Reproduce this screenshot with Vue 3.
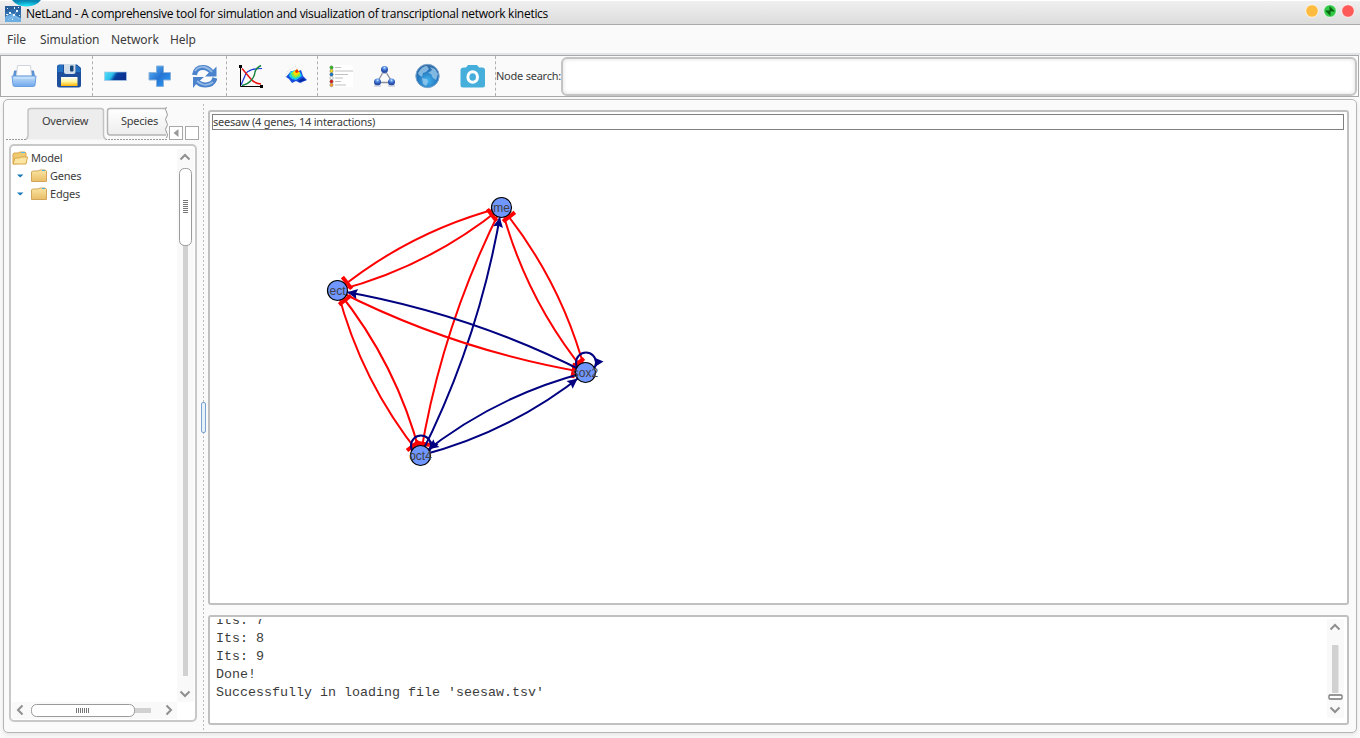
<script setup>
const menus = ['File', 'Simulation', 'Network', 'Help']

const nodes = {
  me: { x: 501.5, y: 207.5, label: 'me' },
  ect: { x: 337.5, y: 290.5, label: 'ect' },
  oct4: { x: 420.5, y: 455.5, label: 'oct4' },
  sox2: { x: 585.5, y: 372.5, label: 'sox2' },
}

const links = [
  ['ect', 'me', 'inhibit'], ['me', 'ect', 'inhibit'],
  ['me', 'sox2', 'inhibit'], ['sox2', 'me', 'inhibit'],
  ['me', 'oct4', 'inhibit'], ['oct4', 'me', 'activate'],
  ['ect', 'sox2', 'inhibit'], ['sox2', 'ect', 'activate'],
  ['ect', 'oct4', 'inhibit'], ['oct4', 'ect', 'inhibit'],
  ['oct4', 'sox2', 'activate'], ['sox2', 'oct4', 'activate'],
]

const BEND = 20
const RADIUS = 10

// Quadratic edge bent to one side, with the marker placed where it meets the target circle
const edges = links.map(([from, to, kind]) => {
  const a = nodes[from]
  const b = nodes[to]
  const dx = b.x - a.x
  const dy = b.y - a.y
  const len = Math.hypot(dx, dy)
  const cx = (a.x + b.x) / 2 - (dy / len) * BEND
  const cy = (a.y + b.y) / 2 + (dx / len) * BEND
  let t = 1
  let px = b.x
  let py = b.y
  while (Math.hypot(px - b.x, py - b.y) < RADIUS) {
    t -= 0.001
    px = (1 - t) ** 2 * a.x + 2 * t * (1 - t) * cx + t * t * b.x
    py = (1 - t) ** 2 * a.y + 2 * t * (1 - t) * cy + t * t * b.y
  }
  const tx = (1 - t) * (cx - a.x) + t * (b.x - cx)
  const ty = (1 - t) * (cy - a.y) + t * (b.y - cy)
  const angle = (Math.atan2(ty, tx) * 180) / Math.PI
  return {
    id: from + to,
    kind,
    d: `M${a.x} ${a.y}Q${cx} ${cy} ${b.x} ${b.y}`,
    marker: `translate(${px} ${py}) rotate(${angle})`,
  }
})

const loops = [nodes.oct4, nodes.sox2]
const log = ['Its: 7', 'Its: 8', 'Its: 9', 'Done!', "Successfully in loading file 'seesaw.tsv'"]
const legend = ['#2fc21e', '#f4dc1c', '#1575cf', '#fff', '#e01818', '#ffa02b']
</script>

<template>
  <div class="window">
    <header class="titlebar">
      <svg class="orb" width="32" height="7" viewBox="0 0 32 7">
        <defs>
          <radialGradient id="orb" cx=".5" cy=".85" r=".7"><stop offset="0" stop-color="#19e0f5" /><stop offset="1" stop-color="#0787b4" /></radialGradient>
        </defs>
        <path d="M1 0H30Q25 6.500 15.500 6.500Q6 6.500 1 0Z" fill="url(#orb)" />
      </svg>
      <svg class="app-icon" width="16" height="16" viewBox="0 0 16 16">
        <rect width="16" height="16" fill="#2f6fae" />
        <path d="M0 11L7 8L16 12V16H0Z" fill="#6aaee4" />
        <path d="M0 0H16V4L8 3L0 6Z" fill="#285e99" />
        <path d="M1 11L5 7L9 9L12 5M9 9L7 14M9 9L14 13M3 14L7 11" stroke="#a9cdec" fill="none" stroke-width=".6" />
        <g fill="#e8f3fc"><rect x="4" y="6" width="2" height="2" /><rect x="11" y="4" width="2" height="2" /><rect x="8" y="8" width="2" height="2" /><rect x="2" y="2" width="1" height="1" /><rect x="13" y="1" width="1" height="1" /><rect x="7" y="13" width="1" height="1" /><rect x="9" y="1" width="1" height="2" /><rect x="1" y="8" width="2" height="1" /><rect x="14" y="9" width="1" height="1" /></g>
      </svg>
      <span class="title">NetLand - A comprehensive tool for simulation and visualization of transcriptional network kinetics</span>
      <svg class="controls" width="54" height="16" viewBox="0 0 54 16">
        <g stroke="#fff" stroke-opacity=".8" stroke-width="1">
          <circle cx="8" cy="8" r="6.300" fill="#fdbc40" /><circle cx="26" cy="8" r="6.300" fill="#35c94a" /><circle cx="44" cy="8" r="6.300" fill="#ff5a57" />
        </g>
        <path d="M25.500 3L31 8.500H25.500ZM21 7.500H26.500V13Z" fill="#07650f" />
      </svg>
    </header>

    <nav class="menubar">
      <span v-for="m in menus" :key="m" :class="m.toLowerCase()">{{ m }}</span>
    </nav>

    <div class="toolbar">
      <div class="group g1">
        <svg width="26" height="26" viewBox="0 0 26 26">
          <defs>
            <linearGradient id="tray" x2="0" y2="1"><stop offset="0" stop-color="#c3dffa" /><stop offset="1" stop-color="#6fa8ea" /></linearGradient>
          </defs>
          <path d="M3.500 8L2.500 14H23.500L22.500 8Z" fill="#5b93d8" stroke="#4f86cc" />
          <path d="M5.500 13L6.500 2.500H19.500L20.500 13Z" fill="#fff" stroke="#d0d4da" />
          <path d="M1 13H25L24 22Q23.800 23.500 22.500 23.500H3.500Q2.200 23.500 2 22Z" fill="url(#tray)" stroke="#6a9fdf" />
          <path d="M3 15H23" stroke="#d3e8fc" />
        </svg>
        <svg width="26" height="26" viewBox="0 0 26 26">
          <defs><linearGradient id="disk" x2="0" y2="1"><stop offset="0" stop-color="#fff" /><stop offset=".5" stop-color="#fff6a0" /><stop offset="1" stop-color="#ffb400" /></linearGradient></defs>
          <path d="M3.500 1.500H21L25 5V22Q25 24.500 22.500 24.500H3.500Q1 24.500 1 22V4Q1 1.500 3.500 1.500Z" fill="#1d4f9c" />
          <path d="M1.500 9V4Q1.500 2 4 2H7V9ZM20 2L24.500 6V9H20Z" fill="#2672c2" />
          <path d="M8 1H19.500V9Q19.500 11 17.500 11H10Q8 11 8 9Z" fill="#d2deea" />
          <rect x="14" y="2.500" width="3.500" height="6" rx="1" fill="#164579" />
          <rect x="5" y="14" width="16.500" height="9" fill="url(#disk)" />
        </svg>
      </div>
      <div class="group g2">
        <svg width="26" height="26" viewBox="0 0 26 26">
          <defs>
            <linearGradient id="minus" x2="1" y2=".25"><stop offset="0" stop-color="#55dff8" /><stop offset=".4" stop-color="#2cc0ec" /><stop offset=".6" stop-color="#0440a0" /><stop offset="1" stop-color="#0c2f91" /></linearGradient>
          </defs>
          <rect x="1.500" y="9" width="22" height="8.500" fill="url(#minus)" stroke="#a9c8e4" stroke-width=".7" />
        </svg>
        <svg width="26" height="26" viewBox="0 0 26 26">
          <defs><linearGradient id="plus" x2="1" y2="1"><stop offset="0" stop-color="#65b9fa" /><stop offset=".5" stop-color="#2674d2" /><stop offset="1" stop-color="#2ba2fa" /></linearGradient></defs>
          <path d="M9.500 3H16.500V9.500H23.500V17H16.500V23.500H9.500V17H2V9.500H9.500Z" fill="url(#plus)" stroke="#8bb2dc" />
        </svg>
        <svg width="26" height="26" viewBox="0 0 26 26">
          <g fill="none" stroke="#4a83cc" stroke-width="5">
            <path d="M3.500 12Q4.500 4.500 12 4.500Q17 4.500 20.500 9" />
            <path d="M24 15Q22 22 14.500 22Q9 22 5.500 18" />
          </g>
          <path d="M25.500 3.500V13.500H14L17.500 10L21 8ZM2 25V14H13L9 17.500L6 20Z" fill="#4a83cc" />
          <path d="M4 8Q7 3.500 13 4Q18 5 21 9M22 19Q17 23 12 21.500Q8 20 6 18" fill="none" stroke="#92b9e6" stroke-width="1.800" />
        </svg>
      </div>
      <div class="group g3">
        <svg width="26" height="26" viewBox="0 0 26 26">
          <path d="M3 22L6.500 14Q8 9 11 8Q14 5.500 24 5.500" fill="none" stroke="#1835d8" stroke-width="1.200" />
          <path d="M4 5.500L12 15Q16 20.500 23 21" fill="none" stroke="#e91111" stroke-width="1.400" />
          <path d="M4 22.500Q10 21 12.500 18Q16.500 14 17 9Q18 5 23 2.500" fill="none" stroke="#12843c" stroke-width="1.400" />
          <path d="M2.500 3V23.500H24" fill="none" stroke="#000" />
          <path d="M1 2H4V5H1ZM22 22H25V25H22Z" fill="#000" />
        </svg>
        <svg width="26" height="26" viewBox="0 0 26 26">
          <path d="M2 14L5 8L13 3L21 14L18 22" fill="none" stroke="#d4d4d4" stroke-dasharray="1 2" />
          <path d="M3 14L8 8L12 10L18 7L20 13L24 17L17 20L13 18L9 20L6 16Z" fill="#174ee0" />
          <path d="M7 9L12 7L17 9L19 13L13 17L9 16L6 13Z" fill="#18d0e8" />
          <path d="M8 10L12 8L17 10L17 13L12 15L9 13Z" fill="#7fed49" />
          <path d="M10 9L14 6L17 10L13 13L11 12Z" fill="#ffd900" />
          <path d="M12 8L14 6L16 9L13 10Z" fill="#f03108" />
          <path d="M15 18L20 15L23 17L17 19Z" fill="#07279e" />
        </svg>
      </div>
      <div class="group g4">
        <svg width="26" height="26" viewBox="0 0 26 26">
          <rect x="1" y="2" width="24" height="22" fill="#fff" />
          <g v-for="(c, i) in legend" :key="c">
            <circle cx="3.500" :cy="4.5 + i * 3.5" r="1.700" :fill="c" stroke="#555" stroke-width=".4" />
            <path :d="`M7 ${4.5 + i * 3.5}h${[6, 18, 13, 8, 6, 11][i]}`" stroke="#c0c0c0" stroke-width="1" />
          </g>
        </svg>
        <svg width="26" height="26" viewBox="0 0 26 26">
          <defs><radialGradient id="ball" cx=".5" cy=".25"><stop offset="0" stop-color="#d9ecff" /><stop offset=".4" stop-color="#5b96ea" /><stop offset="1" stop-color="#2a50ab" /></radialGradient></defs>
          <path d="M12.500 7L5 19.500H20.500Z" fill="none" stroke="#8b8d98" stroke-width="1.300" />
          <circle cx="12.500" cy="6.500" r="3.500" fill="url(#ball)" /><circle cx="5.500" cy="19" r="3.500" fill="url(#ball)" /><circle cx="19.500" cy="19" r="3.500" fill="url(#ball)" />
          <path d="M9 10.500H16M2 23H9M16 23H23" stroke="#b8bcca" />
        </svg>
        <svg class="globe" width="26" height="26" viewBox="0 0 26 26">
          <defs><radialGradient id="globe" cx=".5" cy=".7" r=".7"><stop offset="0" stop-color="#42b5f1" /><stop offset=".6" stop-color="#2576bd" /><stop offset="1" stop-color="#34699f" /></radialGradient></defs>
          <circle cx="12.500" cy="13" r="11.700" fill="url(#globe)" stroke="#7ba6cf" />
          <path d="M5 7Q8 3 12 3L14 6L11 9L8 10L7 14L4 12L3 10ZM15 4L20 6L23 11L21 17L18 15L16 11L13 10L17 7ZM7 15L12 16L13 19L11 23L8 21Z" fill="#9fcdee" opacity=".75" />
        </svg>
        <svg width="26" height="26" viewBox="0 0 26 26">
          <path d="M4 4.500H6L8 2H17L19 4.500H22Q25 4.500 25 7V22Q25 24.500 22.500 24.500H3Q.5 24.500 .5 22V7Q.5 4.500 4 4.500Z" fill="#46aedb" />
          <ellipse cx="12.700" cy="14" rx="4.800" ry="5.300" fill="none" stroke="#fff" stroke-width="3" />
        </svg>
      </div>
      <label class="search"><span>Node search:</span><input type="text" aria-label="Node search" /></label>
    </div>

    <main class="workspace">
      <aside class="side">
        <div class="tabs">
          <svg class="tab-shapes" width="196" height="36" viewBox="5 105 196 36">
            <defs><linearGradient id="tab" x2="0" y2="1"><stop offset="0" stop-color="#fff" /><stop offset="1" stop-color="#ededed" /></linearGradient></defs>
            <path d="M6 139.500H26M105 139.500H167" stroke="#999" stroke-dasharray="2 1" />
            <path d="M26 139.500Q28 138 28 135V111Q28 108.500 31 108.500H101Q103.500 108.500 103.500 111V135Q103.500 138 106 139.500Z" fill="#ededed" />
            <path d="M26 139.500Q28 138 28 135V111Q28 108.500 31 108.500H101Q103.500 108.500 103.500 111V135Q103.500 138 106 139.500" fill="none" stroke="#c3c3c3" stroke-width="1.500" />
            <path d="M166 108.500H110Q107.500 108.500 107.500 111V132Q107.500 135 110 135H166" fill="url(#tab)" stroke="#b3b3b3" stroke-width="1.500" />
            <path d="M166.500 107Q164.500 109 166.500 112T166.500 117T166.500 122T166.500 127T166.500 132T166.500 138" fill="none" stroke="#999" />
            <g fill="#fff" stroke="#a8a8a8"><rect x="169.500" y="126.500" width="13" height="13" /><rect x="185.500" y="126.500" width="13" height="13" /></g>
            <path d="M178.500 129V137L173.500 133Z" fill="#999" />
          </svg>
          <span class="tab overview">Overview</span>
          <span class="tab species">Species</span>
        </div>
        <div class="tree">
          <div class="tree-body">
            <div class="row">
              <svg width="16" height="14" viewBox="0 0 16 14">
                <path d="M1 13V3L2 2H6L8 1H13L14 2V12Z" fill="#f0ca70" stroke="#d9a64c" />
                <path d="M9 1.500H13" stroke="#55b8e8" />
                <path d="M1 13L3 7H7L9 6H15.500L14 13Z" fill="#fbe6a1" stroke="#d9a64c" />
              </svg>
              <span>Model</span>
            </div>
            <div v-for="n in ['Genes', 'Edges']" :key="n" class="row child">
              <svg class="caret" width="7" height="4" viewBox="0 0 7 4"><path d="M0 .500H6.500L3.200 3.500Z" fill="#1978b8" /></svg>
              <svg width="16" height="14" viewBox="0 0 16 14">
                <defs><linearGradient id="folder" x2="0" y2="1"><stop offset="0" stop-color="#fae5a3" /><stop offset="1" stop-color="#e9bd66" /></linearGradient></defs>
                <path d="M.5 12.500V3L1.500 2H7L9 1H14L15.500 2V12.500Z" fill="url(#folder)" stroke="#d2a75c" />
                <path d="M11 1.500H14" stroke="#43b0dd" />
              </svg>
              <span>{{ n }}</span>
            </div>
          </div>
          <svg class="vbar" width="17" height="553" viewBox="177 149 17 553">
            <rect x="177" y="149" width="17" height="553" fill="#f9f9f9" />
            <path d="M180.500 159.500L185 155L189.500 159.500M180.500 691.500L185 696L189.500 691.500" class="chev" />
            <rect x="183" y="240" width="5" height="436" fill="#d1d1d1" />
            <rect x="179.500" y="168.500" width="12" height="77" rx="5" fill="#fff" stroke="#9a9a9a" />
            <path d="M183 200.500h5M183 202.500h5M183 204.500h5M183 206.500h5M183 208.500h5M183 210.500h5M183 212.500h5" stroke="#777" />
          </svg>
          <svg class="hbar" width="165" height="17" viewBox="12 702 165 17">
            <rect x="12" y="702" width="165" height="17" fill="#f9f9f9" />
            <path d="M22.500 705.500L18 710L22.500 714.500M166.500 705.500L171 710L166.500 714.500" class="chev" />
            <rect x="130" y="708" width="21" height="5" fill="#d1d1d1" />
            <rect x="31.500" y="704.500" width="103" height="12" rx="5" fill="#fff" stroke="#9a9a9a" />
            <path d="M76.500 708v5M78.500 708v5M80.500 708v5M82.500 708v5M84.500 708v5M86.500 708v5M88.500 708v5" stroke="#777" />
          </svg>
        </div>
      </aside>

      <div class="divider"><i></i></div>

      <section class="content">
        <div class="canvas">
          <div class="caption">seesaw (4 genes, 14 interactions)</div>
          <svg class="graph" width="1137" height="490" viewBox="210 112 1137 490">
            <g v-for="e in edges" :key="e.id" :class="e.kind">
              <path :d="e.d" class="edge" />
              <path v-if="e.kind === 'inhibit'" d="M-4 -7.500H0V7.500H-4Z" :transform="e.marker" class="head" />
              <path v-else d="M0 0L-10 -5L-8.500 0L-10 5Z" :transform="e.marker" class="head" />
            </g>
            <g v-for="n in loops" :key="n.label" class="activate">
              <circle :cx="n.x + 0.5" :cy="n.y - 10" r="10" class="edge" />
              <path d="M8.500 -15L18 -11L8.500 -5L10 -10Z" :transform="`translate(${n.x} ${n.y})`" class="head" />
            </g>
            <g v-for="n in nodes" :key="n.label">
              <circle :cx="n.x" :cy="n.y" r="10" class="node" />
              <text :x="n.x" :y="n.y + 4.5" class="label">{{ n.label }}</text>
            </g>
          </svg>
        </div>
        <div class="console">
          <div class="log"><div v-for="l in log" :key="l">{{ l }}</div></div>
          <svg width="17" height="99" viewBox="1327 619 17 99">
            <rect x="1327" y="619" width="17" height="99" fill="#f9f9f9" />
            <path d="M1330.500 629.500L1335 625L1339.500 629.500M1330.500 707.500L1335 712L1339.500 707.500" class="chev" />
            <rect x="1332" y="645" width="6.500" height="48" rx="1" fill="#d1d1d1" />
            <rect x="1329" y="695" width="13" height="4" rx="1" fill="#fff" stroke="#777" stroke-width="1.300" />
          </svg>
        </div>
      </section>
    </main>
  </div>
</template>

<style>
html, body { margin: 0; background: #fafafa; overflow: hidden; }
</style>

<style scoped>
.window { width: 1360px; height: 738px; box-sizing: border-box; display: flex; flex-direction: column; background: #fafafa; font: 11px/18px "Noto Sans", "Open Sans", sans-serif; letter-spacing: -.24px; color: #3c3c3c; }
svg { display: block; flex: none; }

.titlebar { position: relative; height: 25px; box-sizing: border-box; border-top: 1px solid #fff; border-bottom: 1px solid #aaa; background: linear-gradient(#f0f0f0, #dcdcdc); display: flex; align-items: center; padding: 0 2px 0 5px; }
.orb { position: absolute; left: 11px; top: -1px; }
.app-icon { margin-top: 2px; }
.title { flex: 1; margin-left: 5px; color: #000; font: 12px/18px "Open Sans", "Noto Sans", sans-serif; letter-spacing: -.29px; white-space: nowrap; padding-top: 2px; }
.controls { margin-top: -3px; }

.menubar { height: 30px; box-sizing: border-box; border-bottom: 2px solid #e0e5e8; display: flex; align-items: center; padding: 1px 0 0 7px; font-size: 12px; letter-spacing: -.08px; }
.menubar span { width: 33px; }
.menubar .simulation { width: 71px; }
.menubar .network { width: 59px; }

.toolbar { width: 1359px; height: 42px; box-sizing: border-box; border: 1px solid #a8a8a8; display: flex; }
.group { display: flex; align-items: center; box-sizing: border-box; border-right: 1px dashed #b0b0b0; }
.g1 { width: 92px; padding-left: 10px; gap: 19px; }
.g2 { width: 134px; padding-left: 10px; gap: 18px; }
.g3 { width: 91px; padding-left: 11px; gap: 19px; }
.g4 { width: 178px; padding-left: 10px; gap: 18px; }
.globe { margin: 0 1px 0 -1px; }
.search { flex: 1; display: flex; align-items: center; }
.search span { width: 65px; white-space: nowrap; letter-spacing: -.24px; }
.search input { flex: 1; min-width: 0; height: 39px; box-sizing: border-box; border: 2px solid #c4c4c4; border-radius: 6px; background: #fff; box-shadow: inset 0 0 4px #ddd; margin: 1px 1px 0 0; }

.workspace { width: 1354px; height: 634px; margin: 2px 0 0 3px; box-sizing: border-box; border: 1px solid #b5b5b5; border-radius: 5px; display: flex; box-shadow: 0 2px 4px #e5e5e5; background: #fafafa; }
.side { width: 197px; padding: 5px 0 0 1px; box-sizing: border-box; }
.tabs { position: relative; height: 38px; display: flex; }
.tab-shapes { position: absolute; left: 0; top: 0; }
.tab { position: relative; line-height: 31px; }
.overview { margin-left: 37px; width: 79px; }
.tree { margin-left: 4px; width: 188px; height: 578px; margin-top: 1px; box-sizing: border-box; border: 2px solid #c8c8c8; border-radius: 5px; background: #fff; display: grid; grid-template-columns: 165px 17px; grid-template-rows: 553px 17px; padding: 3px 0 0 1px; }
.row { display: flex; height: 18px; align-items: center; gap: 3px; }
.row.child { padding-left: 5px; }
.row .caret { margin-right: 4px; }
.chev { fill: none; stroke: #8f8f8f; stroke-width: 2; }

.divider { width: 7px; display: flex; align-items: center; justify-content: center; background: repeating-linear-gradient(#bcbcbc 0 2px, transparent 2px 4px) 2px 4px / 1px 626px no-repeat; }
.divider i { width: 5px; height: 31px; box-sizing: border-box; border: 1px solid #7ba3d0; border-radius: 2px; background: #e6f1fa; margin: 2px 2px 0 0; }

.content { width: 1141px; padding-top: 10px; display: flex; flex-direction: column; gap: 10px; }
.canvas, .console { box-sizing: border-box; border: 2px solid #c0c0c0; border-radius: 3px; background: #fff; }
.canvas { height: 495px; position: relative; }
.caption { position: relative; margin: 2px 3px 0 2px; height: 16px; box-sizing: border-box; border: 1px solid #808080; line-height: 14px; }
.graph { position: absolute; left: 0; top: 0; }
.edge { fill: none; stroke-width: 2; }
.inhibit .edge { stroke: #f00; }
.inhibit .head { fill: #f00; }
.activate .edge { stroke: #000080; }
.activate .head { fill: #000080; }
.node { fill: #7096ff; stroke: #000; stroke-width: 1.2; }
.label { font: 12px "Liberation Sans", Arial, sans-serif; letter-spacing: 0; fill: #404040; text-anchor: middle; }

.console { height: 110px; display: flex; padding: 2px 3px 0 6px; }
.log { flex: 1; height: 100px; overflow: hidden; font: 13.33px/18px "Liberation Mono", "Courier New", monospace; letter-spacing: 0; }
.log div:first-child { margin-top: -7px; }
</style>
